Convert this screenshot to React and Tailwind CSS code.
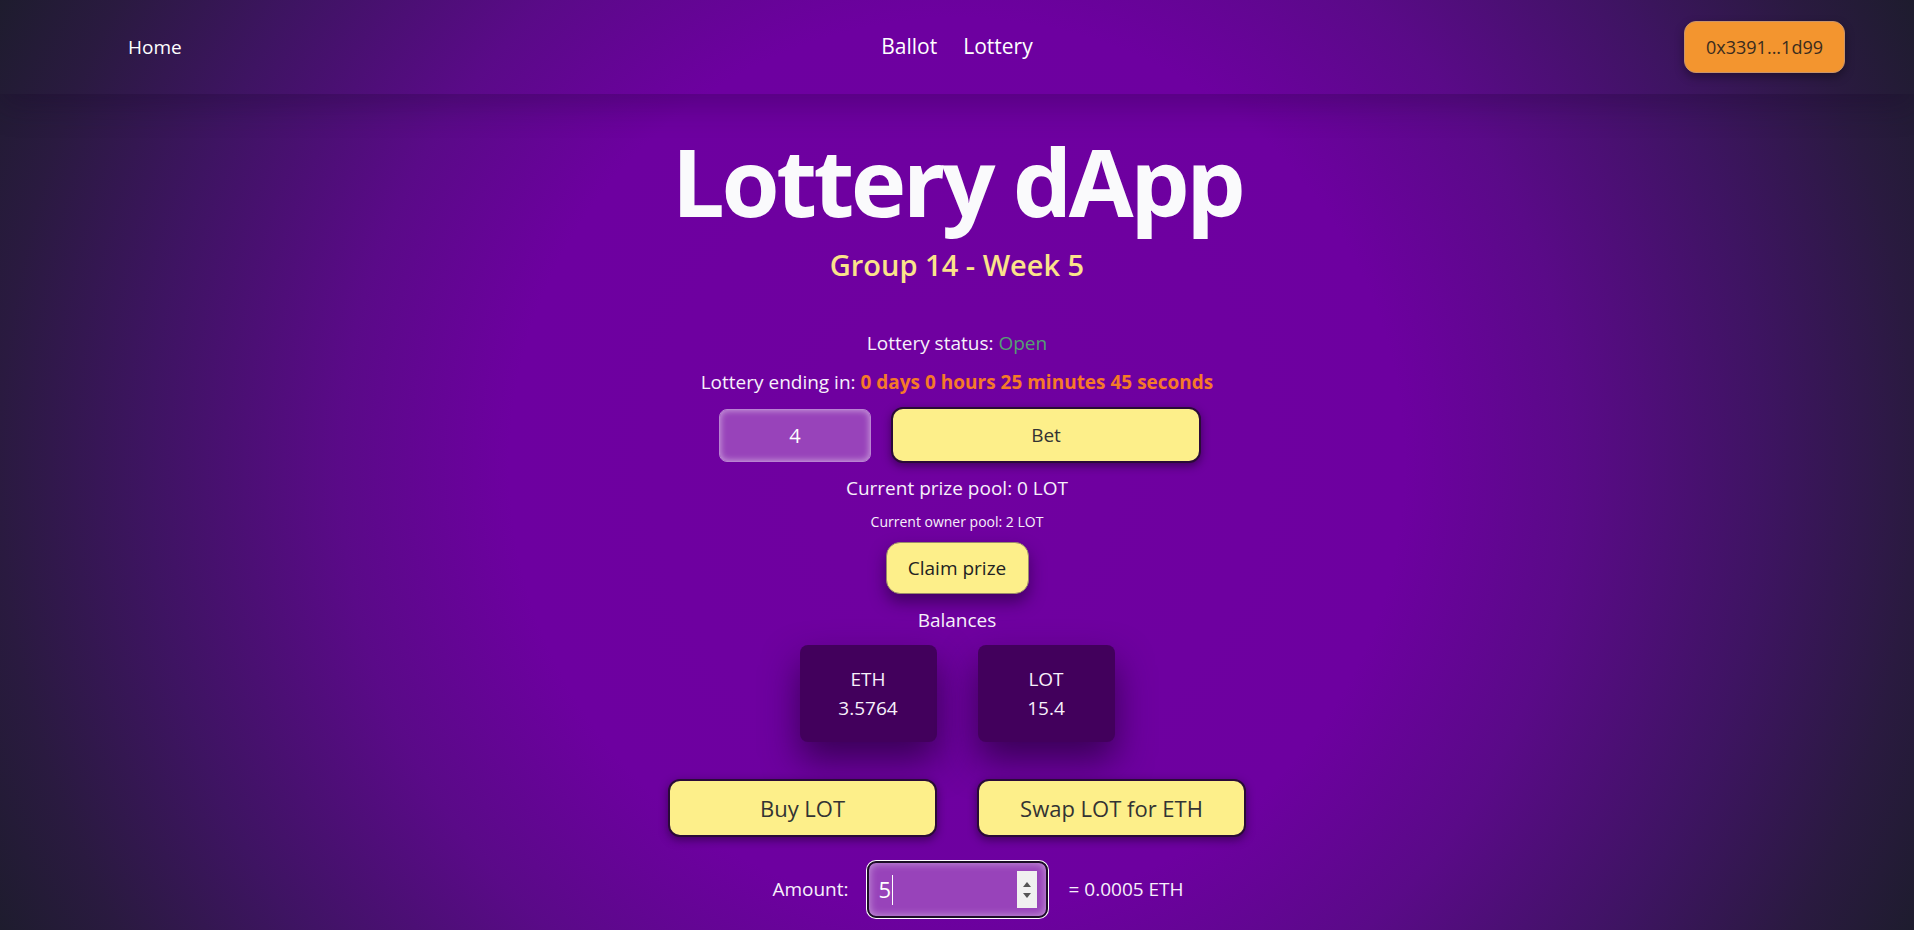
import React, { useState } from "react";

export default function App() {
  const [betAmount] = useState("4");
  const [amount] = useState("5");

  return (
    <div
      className="min-h-screen w-full text-[#f7f0fb] bg-[radial-gradient(circle_at_center,#7000a0_0%,#6d00a0_42%,#5a0a88_58%,#3e1462_76%,#2a1a40_90%,#1e1c2e_100%)]"
      style={{ fontFamily: '"Open Sans", "Noto Sans", sans-serif' }}
    >
      {/* Header */}
      <header className="h-[94px] grid grid-cols-[1fr_auto_1fr] items-center shadow-[0_10px_30px_rgba(20,0,40,0.28)]">
        <div className="pl-[128px] text-[19px] text-white">Home</div>
        <nav className="flex gap-[26px] text-[21px] text-white">
          <span>Ballot</span>
          <span>Lottery</span>
        </nav>
        <div className="flex justify-end pr-[69px]">
          <button className="w-[161px] h-[52px] rounded-[12px] bg-[#f3952f] border border-[#c9946a] text-[18px] text-[#3a2c1e] shadow-[0_4px_10px_rgba(0,0,0,0.35)]">
            0x3391...1d99
          </button>
        </div>
      </header>

      <main className="flex flex-col items-center">
        <h1 className="mt-[37px] text-[94px] leading-[100px] font-bold tracking-[-3.5px] text-[#fafafc]">
          Lottery dApp
        </h1>
        <h2 className="mt-[16px] text-[29px] leading-[36px] font-semibold text-[#fbe38a]">
          Group 14 - Week 5
        </h2>

        <p className="mt-[46px] text-[19px] leading-[28px]">
          Lottery status: <span className="text-[#55a072]">Open</span>
        </p>
        <p className="mt-[11px] text-[19px] leading-[28px]">
          Lottery ending in:{" "}
          <span className="font-bold text-[#f57a28]">
            0 days 0 hours 25 minutes 45 seconds
          </span>
        </p>

        {/* Bet row */}
        <div className="mt-[11px] ml-[6px] flex items-center gap-[20px]">
          <input
            type="text"
            value={betAmount}
            readOnly
            className="w-[152px] h-[53px] rounded-[8px] bg-[#9843ba] border border-[#b983d2] text-center text-[20px] text-white outline-none shadow-[inset_0_0_7px_rgba(255,255,255,0.55)]"
          />
          <button className="w-[310px] h-[56px] rounded-[12px] bg-[#fdef8a] border-2 border-[#2a0a38] text-[19px] text-[#333] shadow-[0_3px_8px_rgba(20,0,30,0.5)]">
            Bet
          </button>
        </div>

        <p className="mt-[11px] text-[19px] leading-[28px]">Current prize pool: 0 LOT</p>
        <p className="mt-[10px] text-[14px] leading-[20px]">Current owner pool: 2 LOT</p>

        <button className="mt-[10px] w-[143px] h-[52px] rounded-[14px] bg-[#fdef8a] border border-[#9a8a6a] text-[19px] text-[#222] shadow-[0_8px_16px_rgba(30,0,50,0.55)]">
          Claim prize
        </button>

        <p className="mt-[12px] text-[19px] leading-[28px]">Balances</p>

        {/* Balance cards */}
        <div className="mt-[11px] flex gap-[41px]">
          {[
            { label: "ETH", value: "3.5764" },
            { label: "LOT", value: "15.4" },
          ].map((b) => (
            <div
              key={b.label}
              className="w-[137px] h-[97px] rounded-[8px] bg-[#42005c] flex flex-col items-center justify-center text-[19px] leading-[29px] shadow-[0_18px_36px_rgba(35,0,55,0.7)]"
            >
              <span>{b.label}</span>
              <span>{b.value}</span>
            </div>
          ))}
        </div>

        {/* Buy / Swap */}
        <div className="mt-[37px] flex gap-[40px]">
          <button className="w-[269px] h-[58px] rounded-[12px] bg-[#fdef8a] border-2 border-[#2a0a38] text-[22px] text-[#333] shadow-[0_3px_8px_rgba(20,0,30,0.5)]">
            Buy LOT
          </button>
          <button className="w-[269px] h-[58px] rounded-[12px] bg-[#fdef8a] border-2 border-[#2a0a38] text-[22px] text-[#333] shadow-[0_3px_8px_rgba(20,0,30,0.5)]">
            Swap LOT for ETH
          </button>
        </div>

        {/* Amount row */}
        <div className="mt-[24px] w-full grid grid-cols-[1fr_auto_1fr] items-center text-[19px]">
          <span className="justify-self-end mr-[18px]">Amount:</span>
          <div className="w-[181px] h-[57px] rounded-[9px] bg-[#9843ba] border-2 border-[#1b0d26] ring-1 ring-white shadow-[inset_0_0_8px_rgba(255,255,255,0.5)] flex items-center pl-[10px] pr-[9px]">
            <span className="text-[22px] text-white">{amount}</span>
            <span className="w-px h-[30px] bg-white ml-[1px]" />
            <div className="flex-1" />
            <div className="w-[20px] h-[37px] bg-[#f0f0f0] flex flex-col items-center justify-center gap-[6px]">
              <svg width="8" height="5" viewBox="0 0 8 5">
                <path d="M4 0 L8 5 L0 5 Z" fill="#555" />
              </svg>
              <svg width="8" height="5" viewBox="0 0 8 5">
                <path d="M0 0 L8 0 L4 5 Z" fill="#555" />
              </svg>
            </div>
          </div>
          <span className="justify-self-start ml-[21px]">= 0.0005 ETH</span>
        </div>
      </main>
    </div>
  );
}
